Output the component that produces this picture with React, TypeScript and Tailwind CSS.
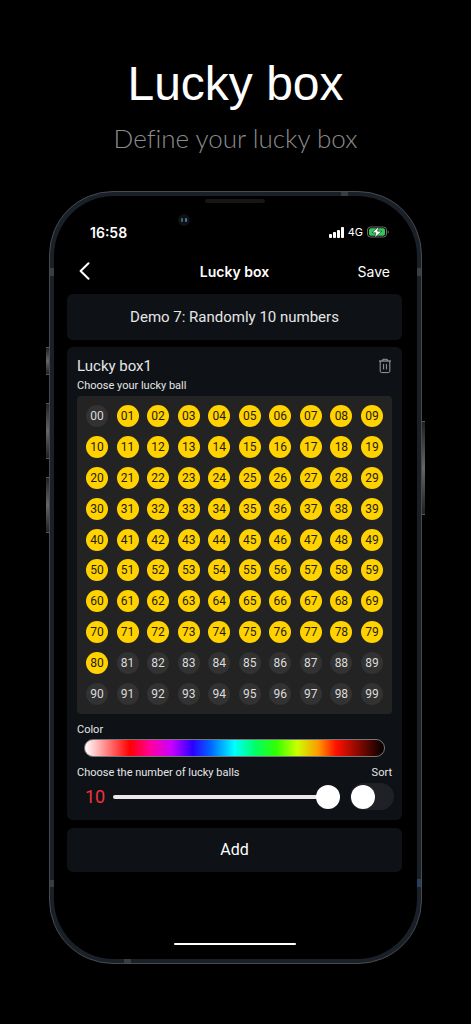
import { useState } from "react";

const BALLS = Array.from({ length: 100 }, (_, i) => i);
const DEFAULT_PICKED = BALLS.filter((n) => n >= 1 && n <= 80);

function SignalIcon() {
  return (
    <svg aria-hidden="true" className="h-[11px] w-[15px]" viewBox="0 0 15 11" fill="white">
      <rect x="0" y="7" width="3" height="4" rx="0.8" />
      <rect x="4" y="5" width="3" height="6" rx="0.8" />
      <rect x="8" y="3" width="3" height="8" rx="0.8" />
      <rect x="12" y="0" width="3" height="11" rx="0.8" />
    </svg>
  );
}

function BatteryIcon() {
  return (
    <svg aria-hidden="true" className="h-3 w-[22px]" viewBox="0 0 22 12">
      <rect x="0.5" y="1" width="19" height="10" rx="3" fill="none" stroke="#6b6b6b" />
      <rect x="2" y="2.2" width="16" height="7.6" rx="1.8" fill="#34c759" />
      <path d="M20.6 4.4c.9.4 1.2 1 1.2 1.6s-.3 1.2-1.2 1.6z" fill="#6b6b6b" />
      <path
        d="M11.8 0.4 5 6.8h3.9L7.6 11.8l7.2-6.6h-4.2z"
        fill="white"
        stroke="black"
        strokeWidth="0.5"
      />
    </svg>
  );
}

function BackIcon() {
  return (
    <svg aria-hidden="true" className="h-[18px] w-[11px]" viewBox="0 0 11 18">
      <path
        d="M9.5 1.2 1.6 9l7.9 7.8"
        fill="none"
        stroke="white"
        strokeWidth="2"
        strokeLinecap="round"
        strokeLinejoin="round"
      />
    </svg>
  );
}

function TrashIcon() {
  return (
    <svg
      aria-hidden="true"
      className="h-4 w-[14px]"
      viewBox="0 0 14 16"
      fill="none"
      stroke="#9a9b9d"
      strokeWidth="1"
    >
      <path d="M1 3h12" strokeWidth="1.2" />
      <path d="M4.7 3V1.3h4.6V3" />
      <path d="M2.2 3v10.2c0 .9.5 1.4 1.4 1.4h6.8c.9 0 1.4-.5 1.4-1.4V3" />
      <path d="M5.6 6v5.4M8.4 6v5.4" />
    </svg>
  );
}

function Ball({
  value,
  picked,
  onToggle,
}: {
  value: number;
  picked: boolean;
  onToggle: () => void;
}) {
  return (
    <button
      aria-pressed={picked}
      className={`flex size-[22px] items-center justify-center rounded-full text-[12px] leading-none ${
        picked ? "bg-[#ffd200] text-[#1f1c10]" : "bg-[#323232] text-[#dcdcdc]"
      }`}
      type="button"
      onClick={onToggle}
    >
      {String(value).padStart(2, "0")}
    </button>
  );
}

// hardware keys and antenna bands sitting on the edge of the phone
function PhoneEdges() {
  const key =
    "absolute w-[3px] border-y border-[#55575a] bg-linear-to-b from-[#222] via-[#666] to-[#222]";
  return (
    <div aria-hidden="true">
      <span className={`${key} -left-1 top-[155px] h-7`} />
      <span className={`${key} -left-1 top-[211px] h-14`} />
      <span className={`${key} -left-1 top-[285px] h-14`} />
      <span className={`${key} -right-1 top-[229px] h-[94px]`} />
      <span className="absolute left-0 top-[76px] h-2 w-1 bg-[#3a3c3f]" />
      <span className="absolute right-0 top-[76px] h-2 w-1 bg-[#3a3c3f]" />
      <span className="absolute right-[73px] top-0 h-1 w-[7px] bg-[#3a3c3f]" />
      <span className="absolute bottom-[76px] left-0 h-[7px] w-1 bg-[#3a3c3f]" />
      <span className="absolute bottom-[76px] right-0 h-2 w-1 bg-[#24405a]" />
      <span className="absolute bottom-0 left-[74px] h-1 w-[7px] bg-[#3a3c3f]" />
    </div>
  );
}

export default function App() {
  const [picked, setPicked] = useState(DEFAULT_PICKED);
  const [count, setCount] = useState(10);
  const [hue, setHue] = useState(70);
  const [sort, setSort] = useState(false);

  const toggle = (n: number) =>
    setPicked((prev) => (prev.includes(n) ? prev.filter((p) => p !== n) : [...prev, n]));

  return (
    <main className="min-h-screen bg-black px-[49px] pb-[60px] pt-14 font-['Roboto',sans-serif] text-[#e6e6e6]">
      <header className="text-center">
        <h1 className="whitespace-nowrap font-['Liberation_Sans',sans-serif] text-[48px] leading-[56px] text-white">
          Lucky box
        </h1>
        <p className="mt-2 whitespace-nowrap font-['Lato',sans-serif] text-[26px] font-light leading-9 text-[#8c8c8c] [font-variant-ligatures:none]">
          Define your lucky box
        </p>
      </header>

      <div className="relative mt-[35px] rounded-[64px] border border-[#484b4e] bg-[#1a2028] p-1">
        <PhoneEdges />
        <div className="relative rounded-[60px] bg-black pb-[14px] pl-[13px] pr-[15px] pt-[26px]">
          <span className="absolute left-[151px] top-[3px] h-1 w-[60px] rounded-full bg-[#161616]" />
          <span className="absolute left-[124px] top-[18px] flex size-3 items-center justify-center gap-[2px] rounded-full bg-[#101113]">
            <span className="h-1 w-[2px] rounded-full bg-[#3f6b62]" />
            <span className="h-1 w-[2px] rounded-full bg-[#4277b8]" />
          </span>

          <div className="flex h-5 items-center justify-between pl-[23px] pr-[13px] font-['Inter',sans-serif] text-white">
            <span className="text-[14px] font-semibold">16:58</span>
            <div className="flex items-center gap-1">
              <SignalIcon />
              <span className="text-[11px]">4G</span>
              <BatteryIcon />
            </div>
          </div>

          <nav className="mt-[17px] grid h-6 grid-cols-[1fr_auto_1fr] items-center px-3 font-['Inter',sans-serif] text-[14px] text-white">
            <button aria-label="Back" className="justify-self-start" type="button">
              <BackIcon />
            </button>
            <h2 className="font-semibold">Lucky box</h2>
            <button className="justify-self-end" type="button">
              Save
            </button>
          </nav>

          <div className="mt-[11px] flex h-[46px] items-center justify-center rounded-md bg-[#0e1216] text-[15px]">
            Demo 7: Randomly 10 numbers
          </div>

          <section className="mt-[7px] rounded-md bg-[#0e1216] px-[10px] pb-[10px] pt-[9px]">
            <div className="flex h-5 items-center justify-between">
              <h3 className="text-[15px]">Lucky box1</h3>
              <button aria-label="Delete Lucky box1" type="button">
                <TrashIcon />
              </button>
            </div>
            <p className="mt-[2px] text-[11px] leading-4">Choose your lucky ball</p>

            <div className="mt-[2px] grid aspect-[315/318] grid-cols-[repeat(10,22px)] content-between justify-between rounded-[4px] bg-[#232323] p-[9px]">
              {BALLS.map((n) => (
                <Ball key={n} value={n} picked={picked.includes(n)} onToggle={() => toggle(n)} />
              ))}
            </div>

            <label className="mt-2 block text-[11px] leading-4" htmlFor="color">
              Color
            </label>
            <div className="mt-px flex px-[7px]">
              <input
                className="h-[18px] w-full appearance-none rounded-full border border-[#77777a] bg-[linear-gradient(to_right,#fff_0%,#ff0000_15%,#ff00a0_22%,#c800ff_29%,#2b00ff_36%,#0066ff_42%,#00ffff_50%,#00ff66_57%,#33ff00_64%,#ccff00_71%,#ff9900_78%,#ff1100_84%,#000_100%)] [&::-webkit-slider-thumb]:appearance-none [&::-webkit-slider-thumb]:opacity-0"
                id="color"
                max={100}
                min={0}
                type="range"
                value={hue}
                onChange={(e) => setHue(Number(e.target.value))}
              />
            </div>

            <div className="mt-2 flex justify-between text-[11px] leading-4">
              <label htmlFor="count">Choose the number of lucky balls</label>
              <label htmlFor="sort">Sort</label>
            </div>
            <div className="-mr-[2px] mt-[2px] flex h-[27px] items-center">
              <output
                className="w-9 shrink-0 text-center text-[18px] text-[#f0323c]"
                htmlFor="count"
              >
                {count}
              </output>
              <input
                className="h-6 min-w-0 flex-1 appearance-none bg-transparent [&::-webkit-slider-runnable-track]:h-1 [&::-webkit-slider-runnable-track]:rounded-full [&::-webkit-slider-runnable-track]:bg-[#ece8e8] [&::-webkit-slider-thumb]:-mt-[10px] [&::-webkit-slider-thumb]:size-6 [&::-webkit-slider-thumb]:appearance-none [&::-webkit-slider-thumb]:rounded-full [&::-webkit-slider-thumb]:bg-white"
                id="count"
                max={10}
                min={1}
                type="range"
                value={count}
                onChange={(e) => setCount(Number(e.target.value))}
              />
              <input
                checked={sort}
                className="ml-[10px] flex h-[27px] w-11 shrink-0 appearance-none items-center rounded-full bg-[#202126] px-px before:size-6 before:rounded-full before:bg-white before:content-[''] checked:justify-end checked:bg-[#34c759]"
                id="sort"
                role="switch"
                type="checkbox"
                onChange={(e) => setSort(e.target.checked)}
              />
            </div>
          </section>

          <button
            className="mt-2 h-11 w-full rounded-md bg-[#0e1216] text-[16px] text-white"
            type="button"
          >
            Add
          </button>

          <div className="mx-auto mt-[71px] h-[2px] w-[122px] rounded-full bg-white" />
        </div>
      </div>
    </main>
  );
}
